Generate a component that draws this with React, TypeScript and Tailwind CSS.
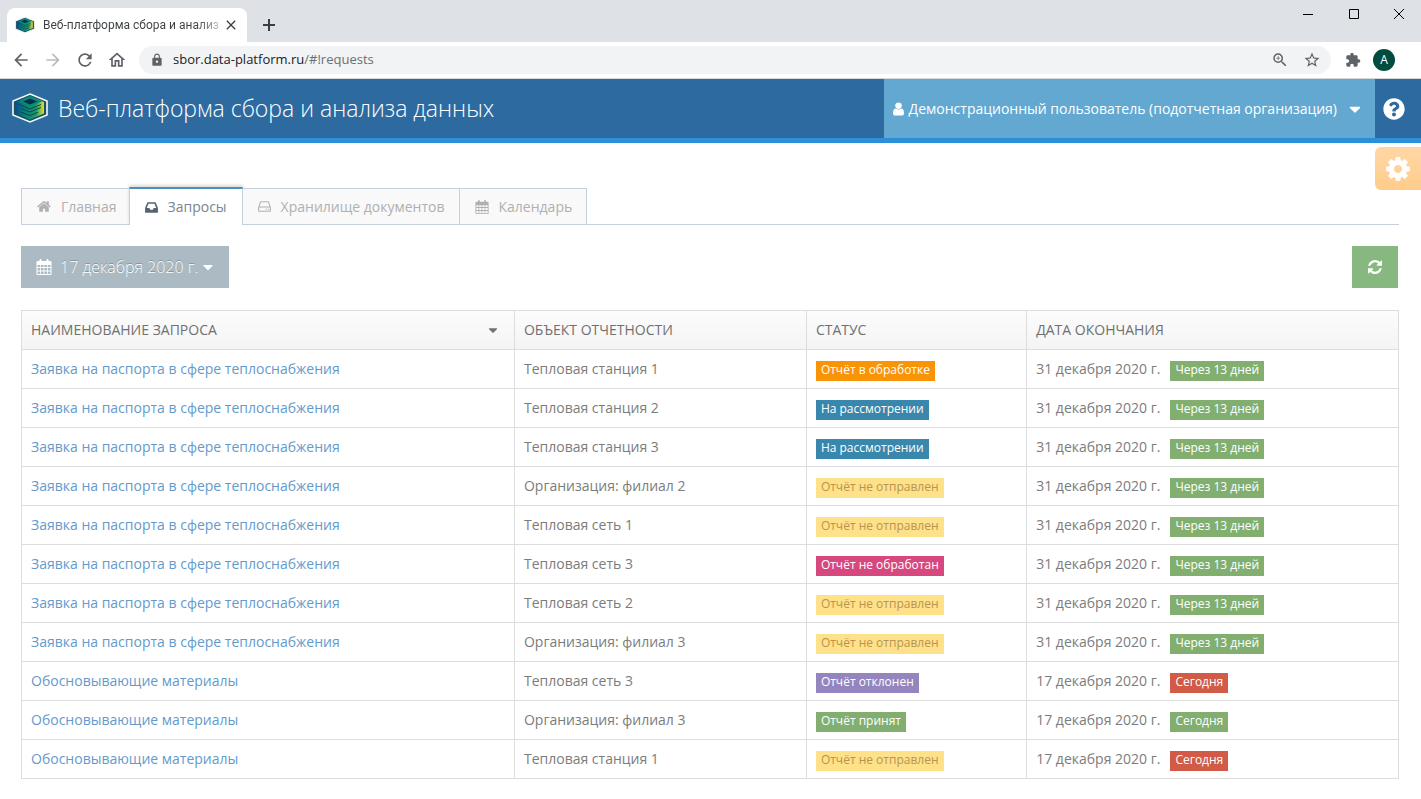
import React from "react";
import clsx from "clsx";
import { FaCaretDown, FaQuestionCircle } from "react-icons/fa";
import {
  MdArrowBack,
  MdArrowForward,
  MdClose,
  MdExtension,
  MdLock,
  MdOutlineHome,
  MdRefresh,
  MdStarBorder,
  MdZoomIn,
} from "react-icons/md";

type IconProps = { className?: string };

function Logo({ className }: IconProps) {
  return (
    <svg viewBox="0 0 36 30" className={className} aria-hidden="true">
      <defs>
        <linearGradient id="layers" x1="0" x2="1" y1="0" y2="0">
          <stop offset="0" stopColor="#0a4f8c" />
          <stop offset="0.3" stopColor="#0a7f78" />
          <stop offset="0.7" stopColor="#149a6c" />
          <stop offset="1" stopColor="#e6dc2a" />
        </linearGradient>
      </defs>
      <path d="M18 1 35 8v14l-17 7L1 22V8z" fill="#1b4f63" stroke="#f4f8fa" strokeWidth="1.6" />
      <path d="M4 9 18 3l14 6v11.500L18 26.500 4 20.500z" fill="url(#layers)" />
      <path d="M6 8.500 18 3.500l12 5-12 5z" fill="#0a8a78" />
      <path d="M11 8.500 18 5.500l7 3-7 3z" fill="#073246" />
      <path
        d="M7 11.500l11 4.500 11-4.500M9 15.500l9 3.500 11-4.500M9 19l9 3.500 8-3.200"
        fill="none"
        stroke="#0a4552"
        strokeWidth="1"
      />
    </svg>
  );
}

function CalendarIcon({ className }: IconProps) {
  return (
    <svg viewBox="0 0 15 16" className={className} fill="currentColor" aria-hidden="true">
      <path
        fillRule="evenodd"
        d="M1 2h2V1a1 1 0 0 1 2 0v1h5V1a1 1 0 0 1 2 0v1h2a1 1 0 0 1 1 1v12a1 1 0 0 1-1 1H1a1 1 0 0 1-1-1V3a1 1 0 0 1 1-1zM1 6v2h2.500V6zM4.300 6v2h2.700V6zM7.800 6v2h2.700V6zM11.300 6v2H14V6zM1 9v2.500h2.500V9zM4.300 9v2.500h2.700V9zM7.800 9v2.500h2.700V9zM11.300 9v2.500H14V9zM1 12.500V15h2.500v-2.500zM4.300 12.500V15h2.700v-2.500zM7.800 12.500V15h2.700v-2.500zM11.300 12.500V15H14v-2.500z"
      />
    </svg>
  );
}

function HomeIcon({ className }: IconProps) {
  return (
    <svg viewBox="0 0 1664 1792" className={className} fill="currentColor" aria-hidden="true">
      <path d="M1408 992v480q0 26-19 45t-45 19h-384v-384h-256v384h-384q-26 0-45-19t-19-45v-480q0-1 .5-3t.5-3l575-474 575 474q1 2 1 6zM1631 923l-62 74q-8 9-21 11h-3q-13 0-21-7l-692-577-692 577q-12 8-24 7-13-2-21-11l-62-74q-8-10-7-23.5t11-21.5l719-599q32-26 76-26t76 26l244 204v-195q0-14 9-23t23-9h192q14 0 23 9t9 23v408l219 182q10 8 11 21.5t-7 23.5z" />
    </svg>
  );
}

function InboxIcon({ className }: IconProps) {
  return (
    <svg viewBox="0 0 1536 1792" className={className} fill="currentColor" aria-hidden="true">
      <path d="M1023 960h316q-1-3-2.5-8.5t-2.5-7.5l-212-496h-708l-212 496q-1 3-2.5 8.5t-2.5 7.5h316l95 192h320zM1536 990v482q0 26-19 45t-45 19h-1408q-26 0-45-19t-19-45v-482q0-62 25-123l238-552q10-25 36.5-42t52.5-17h832q26 0 52.5 17t36.5 42l238 552q25 61 25 123z" />
    </svg>
  );
}

function StorageIcon({ className }: IconProps) {
  return (
    <svg viewBox="0 0 1536 1792" className={className} fill="currentColor" aria-hidden="true">
      <path d="M1040 1216q0 33-23.5 56.5t-56.5 23.5-56.5-23.5-23.5-56.5 23.5-56.5 56.5-23.5 56.5 23.5 23.5 56.5zM1296 1216q0 33-23.5 56.5t-56.5 23.5-56.5-23.5-23.5-56.5 23.5-56.5 56.5-23.5 56.5 23.5 23.5 56.5zM1408 1376v-320q0-13-9.5-22.5t-22.5-9.5h-1216q-13 0-22.5 9.5t-9.5 22.5v320q0 13 9.5 22.5t22.5 9.5h1216q13 0 22.5-9.5t9.5-22.5zM178 896h1180l-157-482q-4-13-16-21.5t-26-8.5h-782q-14 0-26 8.5t-16 21.5zM1536 1056v320q0 66-47 113t-113 47h-1216q-66 0-113-47t-47-113v-320q0-25 16-75l197-606q17-53 63-86t101-33h782q55 0 101 33t63 86l197 606q16 50 16 75z" />
    </svg>
  );
}

function UserIcon({ className }: IconProps) {
  return (
    <svg viewBox="0 0 1280 1792" className={className} fill="currentColor" aria-hidden="true">
      <path d="M1280 1399q0 109-62.5 187t-150.5 78h-854q-88 0-150.5-78t-62.5-187q0-85 8.5-160.5t31.5-152 58.5-131 94-89 134.5-34.5q131 128 313 128t313-128q76 0 134.5 34.5t94 89 58.5 131 31.5 152 8.5 160.5zM1024 512q0 159-112.5 271.5t-271.5 112.5-271.5-112.5-112.5-271.5 112.5-271.5 271.5-112.5 271.5 112.5 112.5 271.5z" />
    </svg>
  );
}

function CogIcon({ className }: IconProps) {
  return (
    <svg viewBox="0 128 1536 1536" className={className} fill="currentColor" aria-hidden="true">
      <path d="M1024 896q0-106-75-181t-181-75-181 75-75 181 75 181 181 75 181-75 75-181zM1536 787v222q0 12-8 23t-20 13l-185 28q-19 54-39 91 35 50 107 138 10 12 10 25t-9 23q-27 37-99 108t-94 71q-12 0-26-9l-138-108q-44 23-91 38-16 136-29 186-7 28-36 28h-222q-14 0-24.5-8.5t-11.5-21.5l-28-184q-49-16-90-37l-141 107q-10 9-25 9-14 0-25-11-126-114-165-168-7-10-7-23 0-12 8-23 15-21 51-66.5t54-70.5q-27-50-41-99l-183-27q-13-2-21-12.5t-8-23.5v-222q0-12 8-23t19-13l186-28q14-46 39-92-40-57-107-138-10-12-10-24 0-10 9-23 26-36 98.5-107.5t94.5-71.5q13 0 26 10l138 107q44-23 91-38 16-136 29-186 7-28 36-28h222q14 0 24.5 8.5t11.5 21.5l28 184q49 16 90 37l142-107q9-9 24-9 13 0 25 10 129 119 165 170 7 8 7 22 0 12-8 23-15 21-51 66.5t-54 70.5q26 50 41 98l183 28q13 2 21 12.5t8 23.5z" />
    </svg>
  );
}

function RefreshIcon({ className }: IconProps) {
  return (
    <svg viewBox="0 128 1536 1536" className={className} fill="currentColor" aria-hidden="true">
      <path d="M1511 1056q0 5-1 7-64 268-268 434.5t-478 166.5q-146 0-282.5-55t-243.5-157l-129 129q-19 19-45 19t-45-19-19-45v-448q0-26 19-45t45-19h448q26 0 45 19t19 45-19 45l-137 137q71 66 161 102t187 36q134 0 250-65t186-179q11-17 53-117 8-23 30-23h192q13 0 22.5 9.5t9.5 22.5zM1536 256v448q0 26-19 45t-45 19h-448q-26 0-45-19t-19-45 19-45l138-138q-148-137-349-137-134 0-250 65t-186 179q-11 17-53 117-8 23-30 23h-199q-13 0-22.5-9.5t-9.5-22.5v-7q65-268 270-434.5t480-166.5q146 0 284 55.5t245 156.5l130-129q19-19 45-19t45 19 19 45z" />
    </svg>
  );
}

function BrowserChrome() {
  return (
    <div className="font-['Open_Sans','Noto_Sans',sans-serif]">
      <div className="flex h-[42px] items-start justify-between bg-[#dee1e6]">
        <div className="flex items-end pl-[7px] pt-2">
          <div className="flex h-[34px] w-60 items-center rounded-t-lg bg-white px-2">
            <Logo className="size-5 shrink-0" />
            <span className="ml-2 flex-1 whitespace-nowrap bg-linear-to-r from-[#3c4043] from-85% to-[#3c4043]/20 bg-clip-text font-['Roboto','Noto_Sans',sans-serif] text-xs text-transparent">
              Веб-платформа сбора и анализ
            </span>
            <button type="button" aria-label="Закрыть вкладку" className="text-[#3c4043]">
              <MdClose className="size-4" />
            </button>
          </div>
          <button type="button" aria-label="Новая вкладка" className="mb-[7px] ml-3 text-[#3c4043]">
            <svg viewBox="0 0 20 20" className="size-5" stroke="currentColor" strokeWidth="2" aria-hidden="true">
              <path d="M10 4v12M4 10h12" />
            </svg>
          </button>
        </div>
        <div className="flex text-black">
          <button type="button" aria-label="Свернуть" className="flex h-7 w-[46px] items-center justify-center">
            <svg viewBox="0 0 10 10" className="size-[10px]" stroke="currentColor" aria-hidden="true">
              <path d="M0 5.500h10" />
            </svg>
          </button>
          <button type="button" aria-label="Развернуть" className="flex h-7 w-[46px] items-center justify-center">
            <svg viewBox="0 0 10 10" className="size-[10px]" stroke="currentColor" fill="none" aria-hidden="true">
              <path d="M.5.5h9v9h-9z" />
            </svg>
          </button>
          <button type="button" aria-label="Закрыть" className="flex h-7 w-[44px] items-center justify-center">
            <svg viewBox="0 0 10 10" className="size-[10px]" stroke="currentColor" aria-hidden="true">
              <path d="M0 0l10 10M10 0L0 10" />
            </svg>
          </button>
        </div>
      </div>
      <div className="flex h-[37px] items-center border-b border-[#d5d7db] bg-white pl-[11px] pr-[26px] text-[#5f6368]">
        <div className="flex gap-3">
          <button type="button" aria-label="Назад"><MdArrowBack className="size-5" /></button>
          <button type="button" aria-label="Вперёд" className="text-[#babcbe]"><MdArrowForward className="size-5" /></button>
          <button type="button" aria-label="Обновить"><MdRefresh className="size-5" /></button>
          <button type="button" aria-label="Домой"><MdOutlineHome className="size-5" /></button>
        </div>
        <div className="ml-3 flex h-7 flex-1 items-center rounded-full bg-[#f1f3f4] pl-[11px] pr-[10px]">
          <MdLock className="size-[14px]" />
          <p className="ml-[9px] flex-1 text-[13px] text-[#6b6f73]">
            <span className="text-[#202124]">sbor.data-platform.ru</span>/#!requests
          </p>
          <button type="button" aria-label="Масштаб"><MdZoomIn className="size-[18px]" /></button>
          <button type="button" aria-label="Добавить в закладки" className="ml-[14px]"><MdStarBorder className="size-[18px]" /></button>
        </div>
        <button type="button" aria-label="Расширения" className="ml-[14px]"><MdExtension className="size-4" /></button>
        <button type="button" className="ml-3 size-[22px] rounded-full bg-[#004d40] text-xs text-white">A</button>
      </div>
    </div>
  );
}

function Header() {
  return (
    <header className="flex h-16 items-stretch border-b-5 border-[#2b8fd9] bg-[#2c6aa0] text-white">
      <a href="#home" className="flex flex-1 items-center pb-px pl-3">
        <Logo className="h-[30px] w-9" />
        <h1 className="ml-[10px] text-[23px] font-light">Веб-платформа сбора и анализа данных</h1>
      </a>
      <button type="button" className="flex items-center bg-[#62a8d1] pl-[9px] pr-[11px] text-sm">
        <UserIcon className="h-4 w-[11px]" />
        <span className="ml-[5px]">Демонстрационный пользователь (подотчетная организация)</span>
        <FaCaretDown className="ml-[9px] size-[18px]" />
      </button>
      <button type="button" aria-label="Помощь" className="flex w-[46px] items-center pl-2">
        <FaQuestionCircle className="size-[22px]" />
      </button>
    </header>
  );
}

const tabs = [
  { title: "Главная", icon: <HomeIcon className="h-[15px] w-[14px]" /> },
  { title: "Запросы", icon: <InboxIcon className="h-[15px] w-[13px]" />, active: true },
  { title: "Хранилище документов", icon: <StorageIcon className="h-[15px] w-[13px]" /> },
  { title: "Календарь", icon: <CalendarIcon className="size-[14px]" /> },
];

function Tabs() {
  return (
    <nav className="flex h-[38px] items-end border-b border-[#c5d0dc]">
      {tabs.map(({ title, icon, active }) => (
        <a
          key={title}
          href="#requests"
          className={clsx(
            "-mb-px flex items-center gap-[10px] border-r pl-[15px] text-sm first:border-l first:pr-3",
            active
              ? "-ml-px h-[38px] border-x border-t-2 border-[#c5d0dc] border-t-[#4c8fbd] bg-white pr-[15px] text-[#7b8490] shadow-[0_-2px_3px_0_rgba(0,0,0,0.15)] *:text-[#576373]"
              : "h-[37px] border-y border-[#c5d0dc] bg-[#f9f9f9] pr-[14px] text-[#b0b0b0]"
          )}
        >
          {icon}
          {title}
        </a>
      ))}
    </nav>
  );
}

const statusStyles: Record<string, string> = {
  "Отчёт в обработке": "bg-[#f89406] text-white",
  "На рассмотрении": "bg-[#3a87ad] text-white",
  "Отчёт не отправлен": "bg-[#fee188] text-[#b89452]",
  "Отчёт не обработан": "bg-[#d6487e] text-white",
  "Отчёт отклонен": "bg-[#9585bf] text-white",
  "Отчёт принят": "bg-[#82af6f] text-white",
};

const request = "Заявка на паспорта в сфере теплоснабжения";
const materials = "Обосновывающие материалы";

const rows = [
  { name: request, object: "Тепловая станция 1", status: "Отчёт в обработке" },
  { name: request, object: "Тепловая станция 2", status: "На рассмотрении" },
  { name: request, object: "Тепловая станция 3", status: "На рассмотрении" },
  { name: request, object: "Организация: филиал 2", status: "Отчёт не отправлен" },
  { name: request, object: "Тепловая сеть 1", status: "Отчёт не отправлен" },
  { name: request, object: "Тепловая сеть 3", status: "Отчёт не обработан" },
  { name: request, object: "Тепловая сеть 2", status: "Отчёт не отправлен" },
  { name: request, object: "Организация: филиал 3", status: "Отчёт не отправлен" },
  { name: materials, object: "Тепловая сеть 3", status: "Отчёт отклонен", today: true },
  { name: materials, object: "Организация: филиал 3", status: "Отчёт принят", today: true },
  { name: materials, object: "Тепловая станция 1", status: "Отчёт не отправлен", today: true },
];

function Badge({ className, children }: { className: string; children: React.ReactNode }) {
  return (
    <span className={clsx("inline-block h-5 whitespace-nowrap px-[5px] align-middle text-xs leading-[18px]", className)}>
      {children}
    </span>
  );
}

function RequestsTable() {
  return (
    <table className="mt-[22px] w-full table-fixed border-collapse text-left text-sm text-[#7c7c7c]">
      <colgroup>
        <col className="w-[35.8%]" />
        <col className="w-[21.2%]" />
        <col className="w-[16%]" />
        <col className="w-[27%]" />
      </colgroup>
      <thead>
        <tr className="h-[39px] bg-linear-to-b from-[#fcfcfc] to-[#f4f4f4] text-[#707070] *:border *:border-[#ddd] *:px-[9px] *:font-normal">
          <th scope="col">
            <button type="button" className="flex w-full items-center justify-between pr-[5px] uppercase">
              Наименование запроса
              <FaCaretDown className="size-[14px]" />
            </button>
          </th>
          <th scope="col" className="uppercase">Объект отчетности</th>
          <th scope="col" className="uppercase">Статус</th>
          <th scope="col" className="uppercase">Дата окончания</th>
        </tr>
      </thead>
      <tbody>
        {rows.map(({ name, object, status, today }, i) => (
          <tr key={i} className="h-[39px] *:border *:border-[#ddd] *:px-[9px]">
            <td>
              <a href="#request" className="text-[#649acb]">{name}</a>
            </td>
            <td>{object}</td>
            <td className="pt-[2px]">
              <Badge className={statusStyles[status]}>{status}</Badge>
            </td>
            <td className="pt-[2px]">
              {today ? "17" : "31"} декабря 2020 г.
              <Badge
                className={clsx(
                  "ml-[10px] text-white",
                  today && status !== "Отчёт принят" ? "bg-[#d15b47]" : "bg-[#82af6f]"
                )}
              >
                {today ? "Сегодня" : "Через 13 дней"}
              </Badge>
            </td>
          </tr>
        ))}
      </tbody>
    </table>
  );
}

export default function App() {
  return (
    <div className="min-h-screen bg-white font-['Open_Sans','Noto_Sans',sans-serif]">
      <BrowserChrome />
      <Header />
      <div className="flex h-[44px] justify-end pt-1">
        <button
          type="button"
          aria-label="Настройки"
          className="flex h-[43px] w-[46px] shrink-0 items-center justify-center rounded-l-md bg-linear-to-b from-[#ffd7a5] to-[#ffcc8a] text-white"
        >
          <CogIcon className="size-6" />
        </button>
      </div>
      <main className="pl-[21px] pr-[22px]">
        <Tabs />
        <div className="mt-[21px] flex justify-between pr-px text-white">
          <button type="button" className="flex h-[42px] items-center bg-[#abbac3] pl-[15px] pr-[13px] text-base font-light text-shadow-[0_-1px_0_rgba(0,0,0,0.25)]">
            <CalendarIcon className="size-4" />
            <span className="ml-2">17 декабря 2020 г.</span>
            <FaCaretDown className="ml-[2px] size-4" />
          </button>
          <button type="button" aria-label="Обновить список" className="flex h-[42px] w-[46px] items-center justify-center bg-[#87b87f]">
            <RefreshIcon className="size-[14px]" />
          </button>
        </div>
        <RequestsTable />
      </main>
    </div>
  );
}
